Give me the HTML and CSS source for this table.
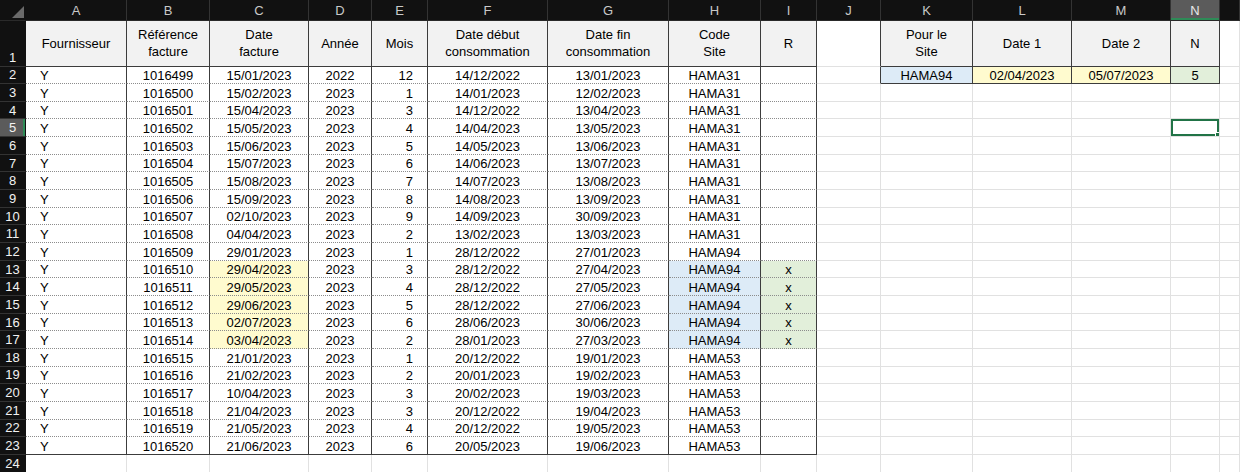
FILE: index.html
```html
<!DOCTYPE html>
<html lang="fr">
  <head>
    <meta charset="UTF-8" />
    <meta name="viewport" content="width=device-width, initial-scale=1.0" />
    <title>Factures par site</title>
    <link rel="stylesheet" href="styles.css">
  </head>
  <body>
    <table class="sheet">
      <colgroup>
        <col style="width: 26px" />
        <col style="width: 101px" />
        <col style="width: 83px" />
        <col style="width: 99px" />
        <col style="width: 63px" />
        <col style="width: 56px" />
        <col style="width: 120px" />
        <col style="width: 121px" />
        <col style="width: 92px" />
        <col style="width: 56px" />
        <col style="width: 64px" />
        <col style="width: 92px" />
        <col style="width: 99px" />
        <col style="width: 99px" />
        <col style="width: 49px" />
        <col style="width: 20px" />
      </colgroup>
      <thead>
        <tr class="letters">
          <th class="corner">
            <svg width="26" height="20" viewBox="0 0 26 20"><polygon points="24,6 24,18 12,18" fill="#6a6a6a" /></svg>
          </th>
          <th>A</th><th>B</th><th>C</th><th>D</th><th>E</th><th>F</th><th>G</th>
          <th>H</th><th>I</th><th>J</th><th>K</th><th>L</th><th>M</th>
          <th class="active-col">N</th><th></th>
        </tr>
      </thead>
      <tbody>
        <tr class="titles">
          <th class="rh">1</th>
          <td>Fournisseur</td>
          <td>Référence<br />facture</td>
          <td>Date<br />facture</td>
          <td>Année</td>
          <td>Mois</td>
          <td>Date début<br />consommation</td>
          <td>Date fin<br />consommation</td>
          <td>Code<br />Site</td>
          <td>R</td>
          <td></td>
          <td>Pour le<br />Site</td>
          <td>Date 1</td>
          <td>Date 2</td>
          <td>N</td>
          <td></td>
        </tr>
        <tr class="rec first">
          <th class="rh">2</th>
          <td>Y</td><td>1016499</td><td>15/01/2023</td><td>2022</td><td>12</td>
          <td>14/12/2022</td><td>13/01/2023</td><td>HAMA31</td><td></td>
          <td></td>
          <td class="blue">HAMA94</td>
          <td class="yellow">02/04/2023</td>
          <td class="yellow">05/07/2023</td>
          <td class="green">5</td>
          <td></td>
        </tr>
        <tr class="rec">
          <th class="rh">3</th>
          <td>Y</td><td>1016500</td><td>15/02/2023</td><td>2023</td><td>1</td>
          <td>14/01/2023</td><td>12/02/2023</td><td>HAMA31</td><td></td>
          <td></td><td></td><td></td><td></td><td></td><td></td>
        </tr>
        <tr class="rec">
          <th class="rh">4</th>
          <td>Y</td><td>1016501</td><td>15/04/2023</td><td>2023</td><td>3</td>
          <td>14/12/2022</td><td>13/04/2023</td><td>HAMA31</td><td></td>
          <td></td><td></td><td></td><td></td><td></td><td></td>
        </tr>
        <tr class="rec">
          <th class="rh active-row">5</th>
          <td>Y</td><td>1016502</td><td>15/05/2023</td><td>2023</td><td>4</td>
          <td>14/04/2023</td><td>13/05/2023</td><td>HAMA31</td><td></td>
          <td></td><td></td><td></td><td></td><td class="selected"></td><td></td>
        </tr>
        <tr class="rec">
          <th class="rh">6</th>
          <td>Y</td><td>1016503</td><td>15/06/2023</td><td>2023</td><td>5</td>
          <td>14/05/2023</td><td>13/06/2023</td><td>HAMA31</td><td></td>
          <td></td><td></td><td></td><td></td><td></td><td></td>
        </tr>
        <tr class="rec">
          <th class="rh">7</th>
          <td>Y</td><td>1016504</td><td>15/07/2023</td><td>2023</td><td>6</td>
          <td>14/06/2023</td><td>13/07/2023</td><td>HAMA31</td><td></td>
          <td></td><td></td><td></td><td></td><td></td><td></td>
        </tr>
        <tr class="rec">
          <th class="rh">8</th>
          <td>Y</td><td>1016505</td><td>15/08/2023</td><td>2023</td><td>7</td>
          <td>14/07/2023</td><td>13/08/2023</td><td>HAMA31</td><td></td>
          <td></td><td></td><td></td><td></td><td></td><td></td>
        </tr>
        <tr class="rec">
          <th class="rh">9</th>
          <td>Y</td><td>1016506</td><td>15/09/2023</td><td>2023</td><td>8</td>
          <td>14/08/2023</td><td>13/09/2023</td><td>HAMA31</td><td></td>
          <td></td><td></td><td></td><td></td><td></td><td></td>
        </tr>
        <tr class="rec">
          <th class="rh">10</th>
          <td>Y</td><td>1016507</td><td>02/10/2023</td><td>2023</td><td>9</td>
          <td>14/09/2023</td><td>30/09/2023</td><td>HAMA31</td><td></td>
          <td></td><td></td><td></td><td></td><td></td><td></td>
        </tr>
        <tr class="rec">
          <th class="rh">11</th>
          <td>Y</td><td>1016508</td><td>04/04/2023</td><td>2023</td><td>2</td>
          <td>13/02/2023</td><td>13/03/2023</td><td>HAMA31</td><td></td>
          <td></td><td></td><td></td><td></td><td></td><td></td>
        </tr>
        <tr class="rec">
          <th class="rh">12</th>
          <td>Y</td><td>1016509</td><td>29/01/2023</td><td>2023</td><td>1</td>
          <td>28/12/2022</td><td>27/01/2023</td><td>HAMA94</td><td></td>
          <td></td><td></td><td></td><td></td><td></td><td></td>
        </tr>
        <tr class="rec">
          <th class="rh">13</th>
          <td>Y</td><td>1016510</td><td class="yellow">29/04/2023</td><td>2023</td><td>3</td>
          <td>28/12/2022</td><td>27/04/2023</td><td class="blue">HAMA94</td><td class="green">x</td>
          <td></td><td></td><td></td><td></td><td></td><td></td>
        </tr>
        <tr class="rec">
          <th class="rh">14</th>
          <td>Y</td><td>1016511</td><td class="yellow">29/05/2023</td><td>2023</td><td>4</td>
          <td>28/12/2022</td><td>27/05/2023</td><td class="blue">HAMA94</td><td class="green">x</td>
          <td></td><td></td><td></td><td></td><td></td><td></td>
        </tr>
        <tr class="rec">
          <th class="rh">15</th>
          <td>Y</td><td>1016512</td><td class="yellow">29/06/2023</td><td>2023</td><td>5</td>
          <td>28/12/2022</td><td>27/06/2023</td><td class="blue">HAMA94</td><td class="green">x</td>
          <td></td><td></td><td></td><td></td><td></td><td></td>
        </tr>
        <tr class="rec">
          <th class="rh">16</th>
          <td>Y</td><td>1016513</td><td class="yellow">02/07/2023</td><td>2023</td><td>6</td>
          <td>28/06/2023</td><td>30/06/2023</td><td class="blue">HAMA94</td><td class="green">x</td>
          <td></td><td></td><td></td><td></td><td></td><td></td>
        </tr>
        <tr class="rec">
          <th class="rh">17</th>
          <td>Y</td><td>1016514</td><td class="yellow">03/04/2023</td><td>2023</td><td>2</td>
          <td>28/01/2023</td><td>27/03/2023</td><td class="blue">HAMA94</td><td class="green">x</td>
          <td></td><td></td><td></td><td></td><td></td><td></td>
        </tr>
        <tr class="rec">
          <th class="rh">18</th>
          <td>Y</td><td>1016515</td><td>21/01/2023</td><td>2023</td><td>1</td>
          <td>20/12/2022</td><td>19/01/2023</td><td>HAMA53</td><td></td>
          <td></td><td></td><td></td><td></td><td></td><td></td>
        </tr>
        <tr class="rec">
          <th class="rh">19</th>
          <td>Y</td><td>1016516</td><td>21/02/2023</td><td>2023</td><td>2</td>
          <td>20/01/2023</td><td>19/02/2023</td><td>HAMA53</td><td></td>
          <td></td><td></td><td></td><td></td><td></td><td></td>
        </tr>
        <tr class="rec">
          <th class="rh">20</th>
          <td>Y</td><td>1016517</td><td>10/04/2023</td><td>2023</td><td>3</td>
          <td>20/02/2023</td><td>19/03/2023</td><td>HAMA53</td><td></td>
          <td></td><td></td><td></td><td></td><td></td><td></td>
        </tr>
        <tr class="rec">
          <th class="rh">21</th>
          <td>Y</td><td>1016518</td><td>21/04/2023</td><td>2023</td><td>3</td>
          <td>20/12/2022</td><td>19/04/2023</td><td>HAMA53</td><td></td>
          <td></td><td></td><td></td><td></td><td></td><td></td>
        </tr>
        <tr class="rec">
          <th class="rh">22</th>
          <td>Y</td><td>1016519</td><td>21/05/2023</td><td>2023</td><td>4</td>
          <td>20/12/2022</td><td>19/05/2023</td><td>HAMA53</td><td></td>
          <td></td><td></td><td></td><td></td><td></td><td></td>
        </tr>
        <tr class="rec end">
          <th class="rh">23</th>
          <td>Y</td><td>1016520</td><td>21/06/2023</td><td>2023</td><td>6</td>
          <td>20/05/2023</td><td>19/06/2023</td><td>HAMA53</td><td></td>
          <td></td><td></td><td></td><td></td><td></td><td></td>
        </tr>
        <tr>
          <th class="rh">24</th>
          <td></td><td></td><td></td><td></td><td></td><td></td><td></td><td></td>
          <td></td><td></td><td></td><td></td><td></td><td></td><td></td>
        </tr>
      </tbody>
    </table>
  </body>
</html>
```

FILE: styles.css
```css
html,
body {
  margin: 0;
  padding: 0;
  background-color: #fff;
  overflow: hidden;
}

.sheet {
  width: 1240px;
  table-layout: fixed;
  border-collapse: separate;
  border-spacing: 0;
  font-family: "Liberation Sans", Arial, sans-serif;
  font-size: 13px;
  color: #000;
}

/* Column letters bar */
.letters th {
  height: 20px;
  padding: 0;
  background-color: #111;
  color: #c9c9c9;
  font-weight: normal;
  text-align: center;
  border-right: 1px solid #333;
  border-bottom: 1px solid #2a2a2a;
  box-sizing: border-box;
}

.letters .corner {
  border-right-color: #111;
  line-height: 0;
}

.letters .active-col {
  background-color: #5b5b5b;
  color: #e8e8e8;
  box-shadow: inset 0 -2px 0 #2e8b57;
}

/* Row numbers */
.rh {
  padding: 0;
  background-color: #111;
  color: #f2f2f2;
  font-weight: normal;
  text-align: center;
  border-bottom: 1px solid #333;
  border-right: 1px solid #111;
}

.rh.active-row {
  background-color: #5b5b5b;
  box-shadow: inset -2px 0 0 #2e8b57;
}

tbody tr {
  height: 17.67px;
}

/* Default grid */
.sheet td {
  padding: 0 3px;
  line-height: 15px;
  white-space: nowrap;
  overflow: hidden;
  vertical-align: bottom;
  border-right: 1px solid #e1e1e1;
  border-bottom: 1px solid #e1e1e1;
}

/* Header row */
.titles {
  height: 45.5px;
}

.titles .rh {
  vertical-align: bottom;
  line-height: 17px;
}

.titles td {
  background-color: #f2f2f2;
  text-align: center;
  vertical-align: middle;
  line-height: 17px;
  border-right-color: #3c3c3c;
  border-bottom-color: #3c3c3c;
}

.titles td:nth-child(11) {
  background-color: #fff;
  border-bottom-color: #e1e1e1;
}

.titles td:nth-child(16) {
  background-color: #fff;
  border-right-color: #e1e1e1;
  border-bottom-color: #e1e1e1;
}

/* Invoice table A:I */
.rec td:nth-child(-n + 10) {
  text-align: center;
  border-right-color: #3c3c3c;
  border-bottom: 1px dotted #8c8c8c;
}

.rec td:nth-child(2) {
  text-align: left;
  padding-left: 14px;
}

.rec td:nth-child(6) {
  text-align: right;
  padding-right: 14px;
}

.rec.end td:nth-child(-n + 10) {
  border-bottom: 1px solid #3c3c3c;
}

/* Site lookup K:N */
.first td:nth-child(11) {
  border-right-color: #3c3c3c;
}

.first td:nth-child(n + 12):nth-child(-n + 15) {
  text-align: center;
  border-right-color: #3c3c3c;
  border-bottom-color: #3c3c3c;
}

.yellow {
  background-color: #fffbcf;
}

.blue {
  background-color: #ddebf7;
}

.green {
  background-color: #e2efda;
}

/* Active cell N5 */
.sheet td.selected {
  position: relative;
  box-shadow: inset 0 0 0 2px #217346;
}

.selected::after {
  content: "";
  position: absolute;
  right: -3px;
  bottom: -3px;
  width: 5px;
  height: 5px;
  background-color: #217346;
  border: 1px solid #fff;
}
```
